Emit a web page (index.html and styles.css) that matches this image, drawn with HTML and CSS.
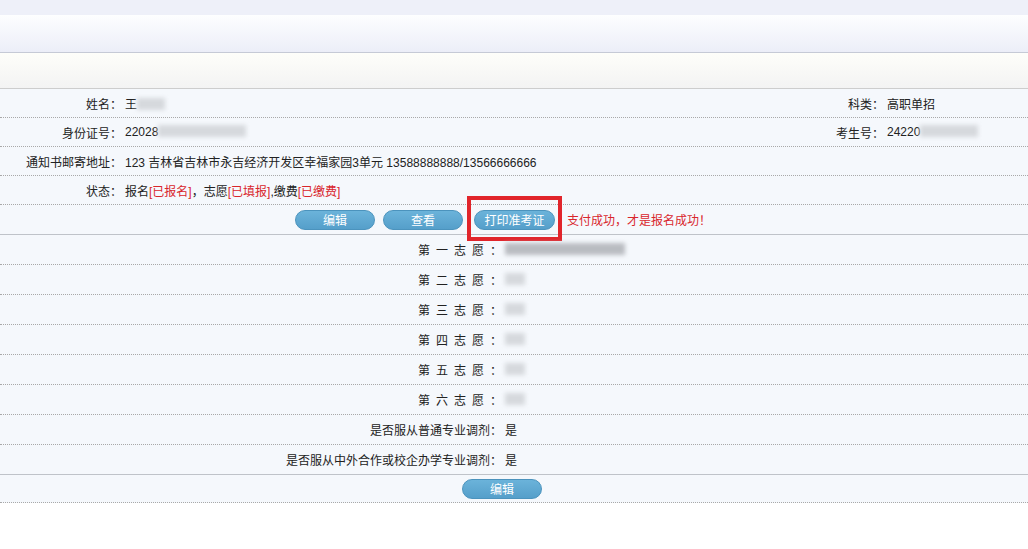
FILE: index.html
```html
<!DOCTYPE html>
<html lang="zh-CN">
<head>
    <meta charset="UTF-8">
    <title>报名信息</title>
    <link rel="stylesheet" href="styles.css">
</head>
<body>
    <div class="top-strip"></div>
    <div class="top-band"></div>
    <div class="sub-band"></div>

    <div class="info">
        <div class="row">
            <div class="lbl">姓名：</div>
            <div class="val">王<span class="mask" style="width:28px"></span></div>
            <div class="lbl2">科类：</div>
            <div class="val2">高职单招</div>
        </div>
        <div class="row">
            <div class="lbl">身份证号：</div>
            <div class="val">22028<span class="mask" style="width:88px"></span></div>
            <div class="lbl2">考生号：</div>
            <div class="val2">24220<span class="mask" style="width:58px"></span></div>
        </div>
        <div class="row">
            <div class="lbl">通知书邮寄地址：</div>
            <div class="val">123 吉林省吉林市永吉经济开发区幸福家园3单元 13588888888/13566666666</div>
        </div>
        <div class="row">
            <div class="lbl">状态：</div>
            <div class="val">报名<span class="red">[已报名]</span>，志愿<span class="red">[已填报]</span>,缴费<span class="red">[已缴费]</span></div>
        </div>
        <div class="row actions">
            <button class="btn">编辑</button>
            <button class="btn btn-view">查看</button>
            <span class="marked"><button class="btn btn-print">打印准考证</button></span>
            <span class="notice">支付成功，才是报名成功！</span>
        </div>
    </div>

    <div class="wishes">
        <div class="wrow">
            <div class="wlbl"><span class="spaced">第一志愿</span>：</div>
            <div class="wval"><span class="mask dark" style="width:120px"></span></div>
        </div>
        <div class="wrow">
            <div class="wlbl"><span class="spaced">第二志愿</span>：</div>
            <div class="wval"><span class="mask" style="width:20px"></span></div>
        </div>
        <div class="wrow">
            <div class="wlbl"><span class="spaced">第三志愿</span>：</div>
            <div class="wval"><span class="mask" style="width:20px"></span></div>
        </div>
        <div class="wrow">
            <div class="wlbl"><span class="spaced">第四志愿</span>：</div>
            <div class="wval"><span class="mask" style="width:20px"></span></div>
        </div>
        <div class="wrow">
            <div class="wlbl"><span class="spaced">第五志愿</span>：</div>
            <div class="wval"><span class="mask" style="width:20px"></span></div>
        </div>
        <div class="wrow">
            <div class="wlbl"><span class="spaced">第六志愿</span>：</div>
            <div class="wval"><span class="mask" style="width:20px"></span></div>
        </div>
        <div class="wrow">
            <div class="wlbl">是否服从普通专业调剂：</div>
            <div class="wval">是</div>
        </div>
        <div class="wrow last">
            <div class="wlbl">是否服从中外合作或校企办学专业调剂：</div>
            <div class="wval">是</div>
        </div>
        <div class="wrow bottom-actions">
            <button class="btn">编辑</button>
        </div>
    </div>
</body>
</html>
```

FILE: styles.css
```css
body {
    margin: 0;
    background: #fff;
    font-family: "Liberation Sans", "Noto Sans CJK SC", sans-serif;
    font-size: 12px;
    color: #222;
}

.top-strip {
    height: 15px;
    background: #eef0f9;
}

.top-band {
    height: 37px;
    background: linear-gradient(#fdfeff, #eceef8);
    border-bottom: 1px solid #c6cad6;
}

.sub-band {
    height: 35px;
    background: linear-gradient(#fefefa, #f3f3f3);
    border-bottom: 1px solid #cdcdcd;
}

.info,
.wishes {
    background: #f5f8fc;
}

.row {
    display: flex;
    align-items: center;
    height: 28px;
    border-bottom: 1px dotted #a9a9a9;
}

.lbl {
    width: 122px;
    text-align: right;
    flex-shrink: 0;
}

.val {
    flex: 1;
    padding-left: 3px;
    white-space: nowrap;
}

.lbl2 {
    width: 90px;
    text-align: right;
}

.val2 {
    width: 141px;
    padding-left: 3px;
}

.red {
    color: #d9262c;
}

.mask {
    display: inline-block;
    height: 12px;
    vertical-align: -1px;
    background: #d6d9dd;
    filter: blur(2px);
}

.mask.dark {
    background: #b9bcc1;
}

.row.actions {
    height: 29px;
    justify-content: center;
    padding-right: 22px;
    border-bottom: 1px solid #bfc3c9;
}

.btn {
    width: 80px;
    height: 20px;
    padding: 0;
    border: 1px solid #4b93bd;
    border-radius: 10px;
    background: linear-gradient(#6bb3da, #559fca);
    color: #fff;
    font-family: "Noto Sans CJK SC", sans-serif;
    font-size: 12px;
    line-height: 18px;
    cursor: pointer;
}

.btn-view {
    margin-left: 8px;
}

.marked {
    position: relative;
    margin-left: 11px;
    display: inline-flex;
}

.marked::after {
    content: "";
    position: absolute;
    left: -7px;
    right: -7px;
    top: -14px;
    bottom: -11px;
    border: 4px solid #e1252b;
}

.btn-print {
    width: 81px;
}

.notice {
    margin-left: 12px;
    color: #d9262c;
}

.wrow {
    display: flex;
    align-items: center;
    height: 29px;
    border-bottom: 1px dotted #a9a9a9;
    padding-right: 24px;
}

.wlbl {
    width: 50%;
    text-align: right;
}

.wval {
    flex: 1;
    padding-left: 3px;
}

.spaced {
    letter-spacing: 6px;
}

.wrow.last {
    border-bottom: 1px solid #bfc3c9;
}

.wrow.bottom-actions {
    height: 27px;
    justify-content: center;
}
```
